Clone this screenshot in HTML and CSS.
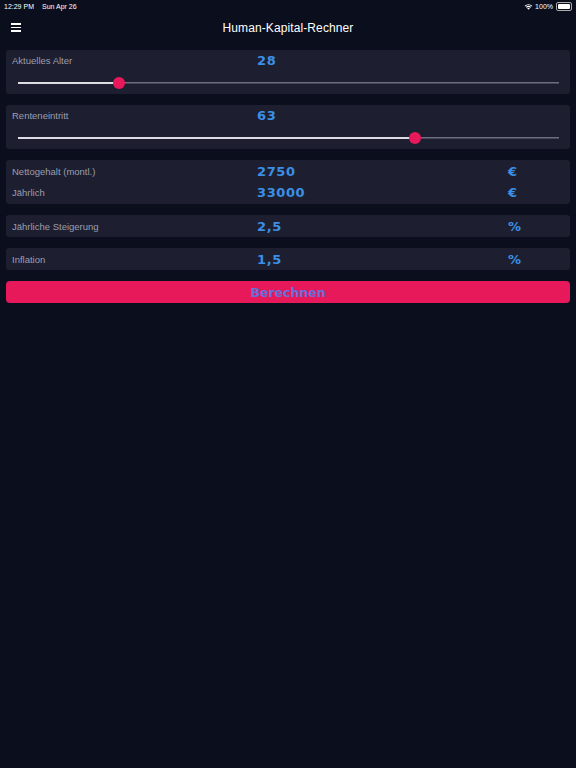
FILE: index.html
```html
<!DOCTYPE html>
<html lang="de">

<head>
    <meta charset="UTF-8">
    <meta name="viewport" content="width=device-width, initial-scale=1.0">
    <title>Human-Kapital-Rechner</title>
    <link rel="stylesheet" href="styles.css">
</head>

<body>
    <!-- Statusleiste -->
    <div class="statusbar">
        <div class="status-left">
            <span>12:29 PM</span>
            <span>Sun Apr 26</span>
        </div>
        <div class="status-right">
            <svg class="wifi" width="9" height="7" viewBox="0 0 18 14">
                <path d="M9 13.5 L6.3 10.6 A3.9 3.9 0 0 1 11.7 10.6 Z" fill="#fff" />
                <path d="M3.9 8.1 A7.4 7.4 0 0 1 14.1 8.1 L12.6 9.7 A5.2 5.2 0 0 0 5.4 9.7 Z" fill="#fff" />
                <path d="M1.4 5.5 A11 11 0 0 1 16.6 5.5 L15.1 7.1 A8.8 8.8 0 0 0 2.9 7.1 Z" fill="#fff" />
            </svg>
            <span>100%</span>
            <div class="battery"><div class="battery-level"></div></div>
        </div>
    </div>

    <!-- Kopfzeile -->
    <header class="topbar">
        <div class="menu-icon">
            <span></span><span></span><span></span>
        </div>
        <h1>Human-Kapital-Rechner</h1>
    </header>

    <!-- Formular -->
    <main class="form">
        <section class="card">
            <div class="row">
                <span class="label">Aktuelles Alter</span>
                <span class="value">28</span>
            </div>
            <div class="slider">
                <div class="track-fill" style="width: 18.7%"></div>
                <div class="thumb" style="left: 18.7%"></div>
            </div>
        </section>

        <section class="card">
            <div class="row">
                <span class="label">Renteneintritt</span>
                <span class="value">63</span>
            </div>
            <div class="slider">
                <div class="track-fill" style="width: 73.4%"></div>
                <div class="thumb" style="left: 73.4%"></div>
            </div>
        </section>

        <section class="card card-double">
            <div class="row">
                <span class="label">Nettogehalt (montl.)</span>
                <span class="value">2750</span>
                <span class="unit">€</span>
            </div>
            <div class="row">
                <span class="label">Jährlich</span>
                <span class="value">33000</span>
                <span class="unit">€</span>
            </div>
        </section>

        <section class="card card-single">
            <div class="row">
                <span class="label">Jährliche Steigerung</span>
                <span class="value">2,5</span>
                <span class="unit">%</span>
            </div>
        </section>

        <section class="card card-single">
            <div class="row">
                <span class="label">Inflation</span>
                <span class="value">1,5</span>
                <span class="unit">%</span>
            </div>
        </section>

        <button class="btn-berechnen">Berechnen</button>
    </main>
</body>

</html>
```

FILE: styles.css
```css
/* Allgemein */
body {
    font-family: "Liberation Sans", Arial, sans-serif;
    margin: 0;
    padding: 0;
    background-color: #0b0e1d;
    color: #fff;
    width: 576px;
    height: 768px;
}

/* Statusleiste */
.statusbar {
    height: 12px;
    padding: 0 4px;
    display: flex;
    justify-content: space-between;
    align-items: center;
    font-size: 7px;
    color: #fff;
}

.status-left {
    display: flex;
    gap: 8px;
}

.status-right {
    display: flex;
    align-items: center;
    gap: 2px;
}

.battery {
    width: 12px;
    height: 5px;
    border: 1px solid #aaa;
    border-radius: 2px;
    padding: 1px;
    margin-left: 1px;
}

.battery-level {
    width: 100%;
    height: 100%;
    background-color: #fff;
    border-radius: 1px;
}

/* Kopfzeile */
.topbar {
    height: 31px;
    display: flex;
    align-items: center;
    justify-content: center;
    position: relative;
}

.topbar h1 {
    margin: 0;
    font-size: 12px;
    font-weight: normal;
    letter-spacing: 0.1px;
}

.menu-icon {
    position: absolute;
    left: 11px;
    top: 11px;
    width: 10px;
    display: flex;
    flex-direction: column;
    gap: 2px;
}

.menu-icon span {
    display: block;
    height: 1.5px;
    background-color: #fff;
}

/* Formular */
.form {
    padding: 7px 6px;
    display: flex;
    flex-direction: column;
    gap: 11px;
}

.card {
    background-color: #1d1f30;
    border-radius: 3px;
    padding: 3px 6px 4px;
    display: flex;
    flex-direction: column;
    gap: 9px;
}

.card-double {
    padding: 4px 6px 5px;
    gap: 7px;
}

.card-single {
    padding: 4px 6px;
}

.row {
    height: 14px;
    display: grid;
    grid-template-columns: 245px 251px 1fr;
    align-items: center;
}

.label {
    font-size: 9.5px;
    color: #9c9eae;
}

.value,
.unit {
    font-family: "DejaVu Sans", sans-serif;
    font-weight: bold;
    font-size: 13px;
    letter-spacing: 0.6px;
    color: #3b8fe6;
}

/* Schieberegler */
.slider {
    position: relative;
    height: 14px;
    margin: 0 5px 0 6px;
    display: flex;
    align-items: center;
    background: linear-gradient(#6d6f7e, #6d6f7e) center / 100% 1.5px no-repeat;
}

.track-fill {
    height: 1.5px;
    background-color: #dcdce4;
}

.thumb {
    position: absolute;
    top: 1px;
    width: 12px;
    height: 12px;
    margin-left: -6px;
    border-radius: 50%;
    background-color: #e8195a;
}

/* Button */
.btn-berechnen {
    height: 22px;
    border: none;
    border-radius: 4px;
    background-color: #e8195a;
    color: #6a6fdc;
    font-family: "DejaVu Sans", sans-serif;
    font-weight: bold;
    font-size: 12.5px;
    padding: 1px 0 0;
}
```
